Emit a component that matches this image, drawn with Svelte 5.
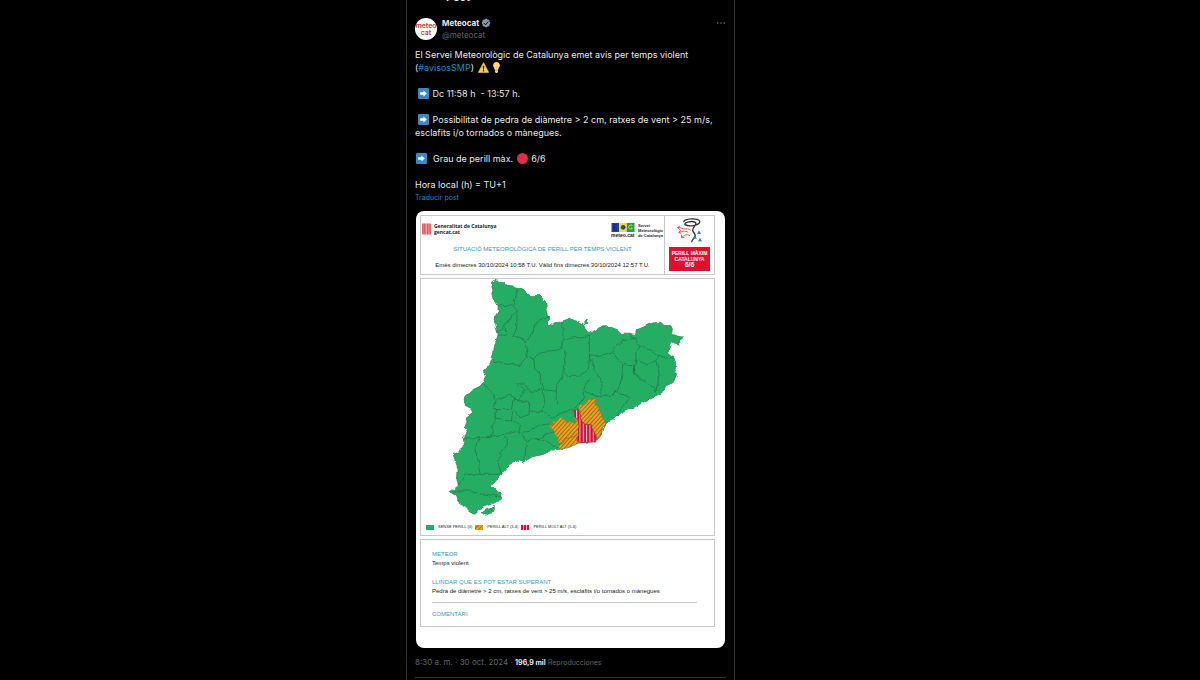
<script lang="ts">
	// Region borders, drawn over the filled land shape
	const borders = [
		'205,92 222,92 240,88 250,92 262,108 248,120 235,140 222,155 215,165 205,172',
		'250,92 255,75 262,55 266,42',
		'205,180 225,182 232,178 225,155',
		'262,108 262,130 260,160 250,185 285,198 310,175 315,150 340,130 357,125',
		'285,198 295,225 290,245 270,272 230,268 190,262',
		'290,245 310,255 322,240 350,230 390,225 400,205',
		'400,142 400,190 395,215 410,235 405,260 400,290 400,305 382,330 380,350 385,390',
		'310,255 312,285 325,290 330,310 345,345 380,350',
		'400,195 440,188 465,185 485,180',
		'480,182 480,215 480,245 520,240 550,235 555,215 580,198 620,190',
		'480,245 478,280 450,305 420,305 405,295',
		'480,245 495,285 510,310 515,330 515,370 465,350',
		'550,235 580,270 578,300 575,320 565,345 540,365 515,365',
		'580,270 612,270 618,300 650,325 675,340 680,360',
		'600,178 635,210 650,222 670,228 685,245 680,258 655,270 620,255 615,280 620,300',
		'635,210 620,235 620,255',
		'680,258 690,300 685,330 678,350',
		'685,245 735,250',
		'480,315 460,350 465,370 450,390 430,405 390,420',
		'540,365 560,350 600,370 580,395 560,427',
		'165,330 190,360 200,375 190,395 200,405 195,440',
		'200,375 240,360 265,375 290,345 270,335 260,325 285,325 300,350 340,345',
		'195,405 245,405 252,370 280,380 300,385 298,420 270,430 255,410',
		'298,410 340,410 345,380 340,345',
		'195,430 245,440 250,405',
		'340,410 370,430 390,420',
		'103,490 150,490 185,485 190,450 195,440',
		'150,490 135,520 150,580 155,600 215,600',
		'185,485 225,480 265,470 270,450 250,438',
		'270,470 290,500 285,560',
		'225,480 235,510 215,530 205,570 215,600',
		'265,475 300,470 330,450 360,445',
		'290,500 330,490 370,470',
		'155,600 110,600 85,635',
		'70,650 120,650 160,660 215,665',
		'320,492 350,500 385,520'
	];

	const land =
		'188,22 197,15 204,22 222,23 232,34 248,36 262,40 280,42 288,50 290,60 308,62 330,62 340,72 348,80 350,95 354,105 352,115 357,125 357,148 370,151 380,143 400,142 405,132 420,130 430,136 448,140 462,147 466,160 475,172 490,172 505,162 520,156 540,155 565,165 580,178 600,178 618,182 622,165 640,158 660,148 680,143 695,142 705,152 725,152 730,163 725,178 742,182 760,187 752,195 752,208 735,205 725,208 718,225 720,240 735,250 740,265 738,285 742,300 735,318 715,333 708,346 690,360 670,370 650,378 630,390 590,410 560,427 550,437 528,445 520,460 515,480 505,495 480,503 450,505 420,518 390,525 370,527 340,540 310,548 285,563 270,557 240,570 215,600 190,630 183,643 195,643 205,653 217,660 215,675 190,688 165,697 145,705 137,720 122,715 115,700 85,685 80,665 60,653 85,635 80,610 82,575 70,545 72,538 88,532 103,510 100,490 112,475 105,458 112,440 108,428 128,415 125,402 110,395 103,372 110,360 130,345 150,335 165,320 170,300 160,292 180,270 190,240 195,210 205,180 200,160 193,130 205,110 205,92 192,80 186,55 190,40';

	const legend = [
		{ level: 'none', label: 'SENSE PERILL (0)' },
		{ level: 'high', label: 'PERILL ALT (3-4)' },
		{ level: 'extreme', label: 'PERILL MOLT ALT (5-6)' }
	];
</script>

{#snippet arrow()}
	<svg class="emoji" viewBox="0 0 36 36" aria-hidden="true">
		<rect width="36" height="36" rx="4" fill="#3b88c3" />
		<path d="M18 8l11 10-11 10v-6H7v-8h11z" fill="#fff" />
	</svg>
{/snippet}

<div class="page">
	<main>
		<header><h1>Post</h1></header>

		<article>
			<div class="author">
				<div class="avatar"><span>meteo</span><span>cat</span></div>
				<div class="names">
					<a class="name" href="#meteocat">
						Meteocat
						<svg class="badge" viewBox="0 0 22 22" aria-label="Verificat">
							<path
								d="M20.4 11c0-.7-.2-1.300-.6-1.900-.3-.5-.8-1-1.400-1.300.2-.6.3-1.300.1-1.900-.1-.6-.4-1.200-.9-1.700s-1-.8-1.700-.9c-.6-.1-1.300-.1-1.900.1-.3-.6-.7-1.100-1.300-1.400C12.300 1.700 11.700 1.600 11 1.600s-1.300.2-1.900.5c-.5.3-1 .8-1.200 1.400-.6-.2-1.300-.3-1.900-.1-.7.1-1.300.4-1.700.9-.5.500-.8 1-.9 1.700-.2.6-.1 1.300.2 1.900-.6.300-1.100.7-1.400 1.300-.4.500-.6 1.200-.6 1.800s.2 1.300.6 1.900c.3.500.8 1 1.400 1.300-.3.600-.3 1.200-.2 1.900.1.6.4 1.200.9 1.700s1 .8 1.700.9c.6.1 1.300.1 1.900-.1.3.600.7 1.100 1.200 1.400.6.400 1.200.5 1.900.5s1.300-.2 1.900-.5c.5-.3 1-.8 1.300-1.400.6.200 1.200.3 1.900.1.6-.1 1.200-.4 1.700-.9s.8-1.100.9-1.700c.1-.6.1-1.300-.1-1.900.6-.3 1.100-.7 1.400-1.300.3-.6.500-1.200.5-1.900z"
								fill="#829aab"
							/>
							<path d="M6 11l4 4 6-7" fill="none" stroke="#111" stroke-width="2.200" />
						</svg>
					</a>
					<a class="handle" href="#meteocat">@meteocat</a>
				</div>
				<button type="button" aria-label="Més opcions">
					<svg viewBox="0 0 24 24">
						<circle cx="4" cy="12" r="2" />
						<circle cx="12" cy="12" r="2" />
						<circle cx="20" cy="12" r="2" />
					</svg>
				</button>
			</div>

			<div class="text">
				<p>
					El Servei Meteorològic de Catalunya emet avís per temps violent<br />
					(<a href="#avisosSMP">#avisosSMP</a>)
					<svg class="emoji" viewBox="0 0 36 36" aria-hidden="true">
						<path d="M18 2L1 34h34z" fill="#ffcc4d" stroke="#ffcc4d" stroke-width="2" stroke-linejoin="round" />
						<path d="M15.500 12h5L19.500 25h-3z" fill="#231f20" />
						<circle cx="18" cy="29" r="2.500" fill="#231f20" />
					</svg><svg class="emoji" viewBox="0 0 36 36" aria-hidden="true">
						<path d="M29 11C29 5 24 0 18 0S7 5 7 11c0 7 5 8 6 16h10c1-8 6-9 6-16z" fill="#ffd983" />
						<path d="M15 14l3 3 3-3M18 17v10" fill="none" stroke="#ffac33" stroke-width="2" />
						<path d="M13 27h10v6l-3 3h-4l-3-3z" fill="#ccd6dd" />
					</svg>
				</p>
				<p class="indent">{@render arrow()} Dc 11:58 h&nbsp; - 13:57 h.</p>
				<p class="indent">
					{@render arrow()} Possibilitat de pedra de diàmetre &gt; 2 cm, ratxes de vent &gt; 25 m/s,<br />
					esclafits i/o tornados o mànegues.
				</p>
				<p>
					{@render arrow()}&nbsp; Grau de perill màx.
					<svg class="emoji" viewBox="0 0 36 36" aria-hidden="true">
						<circle cx="18" cy="18" r="18" fill="#dd2e44" />
					</svg> 6/6
				</p>
				<p>Hora local (h) = TU+1</p>
			</div>
			<a class="translate" href="#translate">Traducir post</a>

			<div class="media">
				<section class="heading">
					<div class="heading-main">
						<div class="logos">
							<svg class="senyera" viewBox="0 0 28 34" aria-hidden="true">
								<rect width="28" height="34" rx="3" fill="#f3a3a8" />
								<path d="M3 0v34M9 0v34M18 0v34M25 0v34" stroke="#d5303e" stroke-width="3" />
							</svg>
							<p class="gencat">Generalitat de Catalunya<br />gencat.cat</p>
							<div class="smc">
								<svg viewBox="0 0 69 27" aria-hidden="true">
									<rect width="23" height="27" fill="#27409b" />
									<rect x="23" width="23" height="27" fill="#f3dc2c" />
									<rect x="46" width="23" height="27" fill="#18a04a" />
									<path d="M16 5H7v16h9M7 13h8" fill="none" stroke="#172465" stroke-width="3" />
									<circle cx="35" cy="13" r="7" fill="#20499b" />
									<path d="M63 7c-10-4-15 5-9 10 4 3 8 1 9-2h-5" fill="none" stroke="#f3dc2c" stroke-width="3" />
								</svg>
								<span>meteo.cat</span>
							</div>
							<p class="servei">Servei<br />Meteorològic<br />de Catalunya</p>
						</div>
						<h2>SITUACIÓ METEOROLÒGICA DE PERILL PER TEMPS VIOLENT</h2>
						<p class="issued">
							Emès dimecres 30/10/2024 10:58 T.U. Vàlid fins dimecres 30/10/2024 12:57 T.U.
						</p>
					</div>
					<div class="level">
						<svg viewBox="0 0 75 75" aria-hidden="true">
							<g fill="none" stroke="#333" stroke-width="4">
								<path d="M20 13C20 1 62-1 68 9c4 12-30 19-44 11-3-7 20-13 31-7 8 8-13 16-7 27 6 8 10 13 3 21-4 4-7 6-7 12" />
							</g>
							<g fill="none" stroke="#dc5642" stroke-width="3">
								<path d="M2 29c10-4 12 6 23 4s12 3 16 3M6 43c12-3 16-6 28 0M13 59c9-8 17-12 26-6" />
								<path d="M9 24l-7 5 7 6M12 37l-7 6 8 4M14 50l-1 9 9-1" />
							</g>
							<path d="M66 37l6 11H60zM53 51l6 11H47zM69 59l6 11H63z" fill="#317db8" />
						</svg>
						<p>PERILL MÀXIM<br />CATALUNYA<br /><strong>6/6</strong></p>
					</div>
				</section>

				<section class="map">
					<svg viewBox="-27 12 882 723" role="img" aria-label="Mapa de perill de Catalunya">
						<defs>
							<filter id="rough" x="-5%" y="-5%" width="110%" height="110%" color-interpolation-filters="sRGB">
								<feTurbulence type="fractalNoise" baseFrequency="0.05" numOctaves="2" seed="4" />
								<feDisplacementMap in="SourceGraphic" scale="14" xChannelSelector="R" yChannelSelector="G" />
							</filter>
							<pattern id="high" width="9" height="9" patternUnits="userSpaceOnUse" patternTransform="rotate(42)">
								<rect width="9" height="9" fill="#eda01d" />
								<rect width="3" height="9" fill="#9c7020" />
							</pattern>
							<pattern id="extreme" width="10" height="10" patternUnits="userSpaceOnUse">
								<rect width="10" height="10" fill="#cf1238" />
								<rect width="3" height="10" fill="#f5c3cc" />
							</pattern>
						</defs>
						<g filter="url(#rough)">
							<g fill="#25ad64" stroke="#277d4e" stroke-width="2">
								<polygon points={land} />
								<polygon points="466,140 473,132 475,146 467,147" />
								<polygon points="156,716 170,706 186,702 194,694 188,714 168,723" />
							</g>
							<g fill="none" stroke="#1f7044" stroke-width="2">
								{#each borders as points}
									<polyline {points} />
								{/each}
							</g>
						</g>
						<polygon
							points="358,455 364,453 372,448 368,440 378,441 385,438 390,430 395,428 400,434 405,435 412,445 425,440 432,446 440,445 435,425 444,421 453,412 448,400 450,390 460,391 470,387 478,373 487,376 498,372 501,377 495,385 500,392 508,395 507,405 515,415 517,428 525,437 528,450 518,460 515,470 513,482 505,495 480,503 450,505 420,518 390,525 388,516 392,508 384,500 388,490 375,482 376,472 368,465"
							fill="url(#high)"
							stroke="#a8781f"
							stroke-width="2"
						/>
						<path d="M388 512l12-6 8-14 14-2 18-8" fill="none" stroke="#7d5f20" stroke-width="2" />
						<polygon
							points="430,407 438,408 445,403 447,412 453,420 452,430 460,445 470,450 485,450 488,462 495,475 502,487 498,503 472,503 450,505 440,495 448,480 446,466 449,455 446,438 435,425 436,416"
							fill="url(#extreme)"
							stroke="#bd1737"
							stroke-width="2"
						/>
					</svg>
					<ul>
						{#each legend as item}
							<li><i class={item.level}></i>{item.label}</li>
						{/each}
					</ul>
				</section>

				<section class="details">
					<h3>METEOR</h3>
					<p>Temps violent</p>
					<h3>LLINDAR QUE ES POT ESTAR SUPERANT</h3>
					<p>Pedra de diàmetre &gt; 2 cm, ratxes de vent &gt; 25 m/s, esclafits i/o tornados o mànegues</p>
					<hr />
					<h3>COMENTARI</h3>
				</section>
			</div>

			<footer>8:30 a. m. · 30 oct. 2024 · <strong>196,9 mil</strong> <small>Reproducciones</small></footer>
		</article>
	</main>
</div>

<style>
	:global(body) {
		background: #000;
		overflow: hidden;
	}

	.page {
		display: grid;
		grid-template-columns: 406fr 329fr 465fr;
		min-height: 100vh;
		font-family: Inter, 'Noto Sans', sans-serif;
		color: #e7e9ea;
	}

	h1,
	h2,
	h3,
	p,
	ul {
		margin: 0;
		padding: 0;
		font-weight: normal;
	}

	a {
		color: #2588cc;
		text-decoration: none;
	}

	main {
		grid-column: 2;
		min-width: 0;
		border: solid #2f3336;
		border-width: 0 1px;
		padding: 0 8px;
	}

	header {
		display: flex;
		align-items: flex-end;
		height: 5px;
		padding-left: 31px;
		overflow: hidden;
	}

	h1 {
		font-size: 11px;
		font-weight: 700;
		line-height: 16px;
	}

	.author {
		display: flex;
		gap: 5px;
		margin-top: 12px;
	}

	.avatar {
		display: flex;
		flex-direction: column;
		align-items: center;
		justify-content: center;
		width: 22px;
		height: 22px;
		margin-top: 1px;
		border-radius: 50%;
		background: #fff;
		color: #c43c3f;
		font-size: 7px;
		font-weight: 600;
		line-height: 7px;
		overflow: hidden;
	}

	.names {
		display: flex;
		flex: 1;
		flex-direction: column;
		font-size: 8px;
		line-height: 12px;
	}

	.name {
		display: flex;
		align-items: center;
		gap: 2px;
		color: #e7e9ea;
		font-weight: 700;
	}

	.badge {
		width: 10px;
		height: 10px;
	}

	.handle {
		color: #62666a;
	}

	button {
		align-self: flex-start;
		display: flex;
		padding: 0;
		border: 0;
		background: none;
	}

	button svg {
		width: 10px;
		height: 12px;
		fill: #71767b;
	}

	.text {
		display: flex;
		flex-direction: column;
		gap: 13px;
		margin-top: 7px;
		font-size: 9px;
		font-weight: 500;
		line-height: 13px;
		white-space: nowrap;
	}

	.indent {
		text-indent: 2px;
	}

	.emoji {
		width: 11px;
		height: 11px;
		margin: 0 1px;
		vertical-align: -2px;
	}

	.translate {
		display: block;
		font-size: 7px;
		line-height: 14px;
	}

	.media {
		margin: 6px 1px 0;
		padding: 4px 10px 21px 4px;
		border-radius: 8px;
		background: #fff;
		color: #222;
		font-family: 'Liberation Sans', Arial, sans-serif;
	}

	section {
		border: 1px solid #c8c8c8;
	}

	.heading {
		display: flex;
	}

	.heading-main {
		flex: 1;
		padding: 7px 1px 1px;
	}

	.logos {
		display: flex;
		align-items: flex-start;
		gap: 3px;
		height: 18px;
	}

	.senyera {
		width: 9px;
		height: 12px;
	}

	.gencat {
		flex: 1;
		font-family: 'Open Sans', sans-serif;
		font-size: 5px;
		font-weight: 700;
		line-height: 6px;
	}

	.smc {
		display: flex;
		flex-direction: column;
		width: 24px;
		font-size: 5px;
		font-weight: 700;
		line-height: 6px;
	}

	.smc svg {
		height: 9px;
	}

	.servei {
		font-size: 4px;
		font-weight: 700;
		line-height: 5px;
	}

	h2 {
		color: #3997c0;
		font-size: 6px;
		line-height: 16px;
		text-align: center;
	}

	.issued {
		font-size: 6px;
		line-height: 16px;
		text-align: center;
	}

	.level {
		display: flex;
		flex-direction: column;
		align-items: center;
		gap: 4px;
		padding: 2px 4px;
		border-left: 1px solid #c8c8c8;
	}

	.level svg {
		width: 25px;
		height: 25px;
	}

	.level p {
		width: 41px;
		padding: 3px 0;
		background: #dc1230;
		color: #fff;
		font-size: 5px;
		font-weight: 700;
		line-height: 6px;
		text-align: center;
	}

	.level strong {
		font-size: 7px;
	}

	.map {
		margin-top: 3px;
	}

	.map svg {
		display: block;
		width: 100%;
	}

	ul {
		display: flex;
		gap: 3px;
		padding: 5px;
		list-style: none;
		font-size: 4px;
		line-height: 6px;
	}

	li {
		display: flex;
		align-items: center;
		gap: 4px;
	}

	i {
		width: 8px;
		height: 5px;
		background: #25ad64;
	}

	.high {
		background: repeating-linear-gradient(135deg, #eda01d 0 2px, #a9781c 2px 3px);
	}

	.extreme {
		background: repeating-linear-gradient(90deg, #cf1238 0 2px, #f5c3cc 2px 3px);
	}

	.details {
		margin-top: 3px;
		padding: 9px 17px 7px 11px;
		font-size: 6px;
		line-height: 9px;
	}

	h3 {
		color: #3997c0;
		font-size: 6px;
		line-height: 10px;
	}

	.details p + h3 {
		margin-top: 9px;
	}

	hr {
		margin: 6px 0;
		border: 0;
		border-top: 1px solid #c8c8c8;
	}

	footer {
		padding: 8px 0;
		border-bottom: 1px solid #2f3336;
		color: #62666a;
		font-size: 8px;
		line-height: 13px;
	}

	footer strong {
		color: #e7e9ea;
		font-size: 7px;
	}

	small {
		font-size: 7px;
	}
</style>
